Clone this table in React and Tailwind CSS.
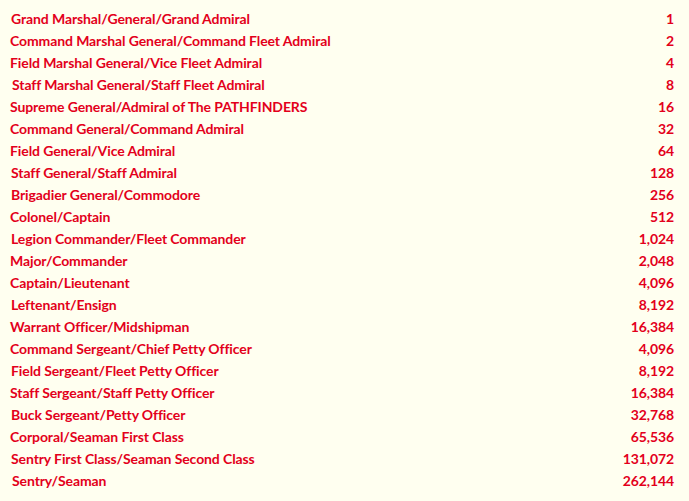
import React from "react";

const rows = [
  ["Grand Marshal/General/Grand Admiral", "1", "pl-[11px]"],
  ["Command Marshal General/Command Fleet Admiral", "2", "pl-[10px]"],
  ["Field Marshal General/Vice Fleet Admiral", "4", "pl-[10px]"],
  ["Staff Marshal General/Staff Fleet Admiral", "8", "pl-[12px]"],
  ["Supreme General/Admiral of The PATHFINDERS", "16", "pl-[10px]"],
  ["Command General/Command Admiral", "32", "pl-[10px]"],
  ["Field General/Vice Admiral", "64", "pl-[10px]"],
  ["Staff General/Staff Admiral", "128", "pl-[11px]"],
  ["Brigadier General/Commodore", "256", "pl-[11px]"],
  ["Colonel/Captain", "512", "pl-[10px]"],
  ["Legion Commander/Fleet Commander", "1,024", "pl-[11px]"],
  ["Major/Commander", "2,048", "pl-[10px]"],
  ["Captain/Lieutenant", "4,096", "pl-[10px]"],
  ["Leftenant/Ensign", "8,192", "pl-[11px]"],
  ["Warrant Officer/Midshipman", "16,384", "pl-[10px]"],
  ["Command Sergeant/Chief Petty Officer", "4,096", "pl-[10px]"],
  ["Field Sergeant/Fleet Petty Officer", "8,192", "pl-[11px]"],
  ["Staff Sergeant/Staff Petty Officer", "16,384", "pl-[10px]"],
  ["Buck Sergeant/Petty Officer", "32,768", "pl-[11px]"],
  ["Corporal/Seaman First Class", "65,536", "pl-[10px]"],
  ["Sentry First Class/Seaman Second Class", "131,072", "pl-[11px]"],
  ["Sentry/Seaman", "262,144", "pl-[12px]"],
];

export default function App() {
  return (
    <div
      className="w-[689px] h-[501px] bg-[#fffff0] pt-[8px] overflow-hidden"
      style={{ fontFamily: "Lato, 'Open Sans', sans-serif" }}
    >
      {rows.map(([label, num, pl], i) => (
        <div
          key={i}
          className={`flex justify-between items-center h-[22px] leading-[22px] pr-[15px] text-[14px] tracking-[-0.1px] font-bold text-[#e3001b] ${pl}`}
        >
          <span>{label}</span>
          <span>{num}</span>
        </div>
      ))}
    </div>
  );
}
